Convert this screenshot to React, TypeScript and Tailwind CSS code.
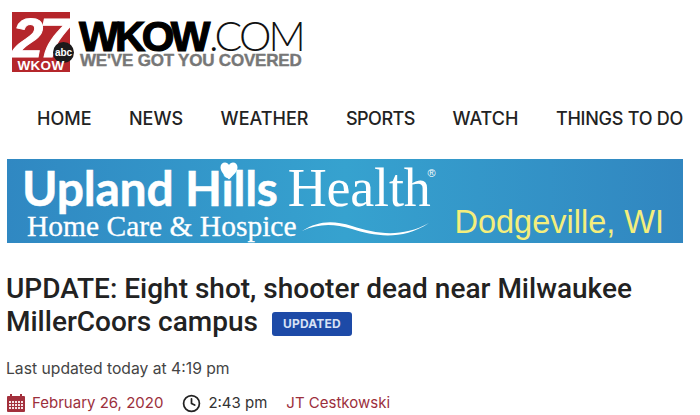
import { Clock } from 'lucide-react';

const navItems = [
  { label: 'HOME', className: '' },
  { label: 'NEWS', className: '' },
  { label: 'WEATHER', className: '' },
  { label: 'SPORTS', className: 'tracking-[-0.5px]' },
  { label: 'WATCH', className: '' },
  { label: 'THINGS TO DO', className: 'tracking-[-0.25px]' },
];

function StationBug() {
  return (
    <div className="relative w-[58px] h-[60px] mt-3 ml-3 shrink-0 bg-[#b5262b]">
      <span className="absolute left-[0px] top-[5px] h-[42px] text-white font-['Liberation_Sans',sans-serif] font-bold italic text-[56px] leading-[42px] tracking-[-4px] [-webkit-text-stroke:1px_white]">
        27
      </span>
      <div className="absolute right-[-4px] top-[30px] w-[21px] h-[21px] rounded-full bg-[#1c1a1b] flex items-center justify-center text-white font-['Liberation_Sans',sans-serif] text-[10px] font-bold leading-none">
        abc
      </div>
      <div className="absolute left-0 right-0 bottom-0 h-[12px] flex items-center justify-center text-white font-['Liberation_Sans',sans-serif] font-bold text-[13.5px] leading-none tracking-[0.3px]">
        WKOW
      </div>
    </div>
  );
}

function Wordmark() {
  return (
    <div className="ml-[9px] mt-[19px] flex flex-col">
      <div className="flex items-baseline h-[33px]">
        <span className="font-['Liberation_Sans',sans-serif] font-bold text-[42px] leading-[33px] text-black tracking-[-3.6px] [-webkit-text-stroke:1.2px_black]">
          WKOW
        </span>
        <span className="font-['Lato',sans-serif] font-light text-[41px] leading-[33px] text-[#111] tracking-[-2.8px] ml-[2px]">
          .COM
        </span>
      </div>
      <span className="ml-[1px] font-['Liberation_Sans',sans-serif] font-bold text-[17px] leading-[17px] text-[#777] tracking-[-0.2px] [-webkit-text-stroke:0.4px_#777]">
        WE&apos;VE GOT YOU COVERED
      </span>
    </div>
  );
}

function CalendarIcon() {
  return (
    <svg width="20" height="20" viewBox="0 0 20 20" className="shrink-0">
      <rect x="1" y="3" width="18" height="16" fill="#a3303c" rx="1" />
      <rect x="4" y="1" width="2" height="4" fill="#a3303c" />
      <rect x="14" y="1" width="2" height="4" fill="#a3303c" />
      <g fill="#f6e4e6">
        {[8, 11, 14].map((y) =>
          [3, 6, 9, 12, 15].map((x) => <rect key={`${x}-${y}`} x={x} y={y} width="2" height="2" />)
        )}
      </g>
    </svg>
  );
}

export default function App() {
  return (
    <div className="w-[700px] h-[415px] overflow-hidden bg-white font-['Inter',sans-serif]">
      <div className="flex h-[88px]">
        <StationBug />
        <Wordmark />
      </div>

      <nav className="flex gap-[37.5px] pl-[37px] h-[58px] items-center whitespace-nowrap text-[18px] font-medium text-[#222] pt-[2px]">
        {navItems.map((item) => (
          <a key={item.label} className={item.className}>{item.label}</a>
        ))}
      </nav>

      <div className="relative mx-[7px] mt-[13px] w-[676px] h-[84px] bg-gradient-to-r from-[#3088c2] via-[#36a2cf] to-[#3186c0] flex items-end justify-between pl-[15px] pr-[19px] pb-[3px] overflow-hidden">
        <div className="flex flex-col">
          <div className="flex items-baseline h-[50px] text-white">
            <span className="font-['Lato',sans-serif] font-bold text-[48px] leading-[50px] tracking-[-0.2px] [-webkit-text-stroke:0.5px_white]">Upland Hills</span>
            <span className="font-['Liberation_Serif',serif] text-[54px] leading-[50px] ml-[10px] tracking-[-0.2px]">Health</span>
            <span className="font-['Liberation_Sans',sans-serif] text-[11px] self-start mt-[2px] ml-[-3px]">®</span>
          </div>
          <div className="flex items-center h-[27px] text-white">
            <span className="font-['Liberation_Serif',serif] text-[29.5px] leading-[27px] ml-[5px] [-webkit-text-stroke:0.3px_white]">Home Care &amp; Hospice</span>
            <svg width="128" height="22" viewBox="0 0 128 22" className="ml-[5px] mt-[2px]">
              <path d="M0 14C16 4 30 3 50 9C74 17 100 21 127 6C100 24 72 19 50 12C30 6 16 7 0 14Z" fill="#fff" />
            </svg>
          </div>
        </div>
        <span className="font-['Liberation_Sans',sans-serif] text-[32.5px] leading-[36px] text-[#f4ee7c]">Dodgeville, WI</span>
        <svg width="18" height="18" viewBox="0 0 18 18" className="absolute left-[213px] top-[3px]">
          <path d="M9 17.5C4 12.5 0.5 9.5 0.5 5.2C0.5 2.4 2.6 0.5 5 0.5C6.8 0.5 8.2 1.5 9 3C9.8 1.5 11.2 0.5 13 0.5C15.4 0.5 17.5 2.4 17.5 5.2C17.5 9.5 14 12.5 9 17.5Z" fill="#fff" />
        </svg>
      </div>

      <h1 className="mt-[29px] ml-[6px] w-[670px] font-['Roboto',sans-serif] font-medium text-[28px] leading-[33px] text-[#222]">
        <span>UPDATE: Eight shot, shooter dead near Milwaukee MillerCoors campus</span>
        <span className="inline-flex align-[3px] items-center justify-center ml-[14px] w-[80px] h-[24px] rounded-[3px] bg-[#1d4aa7] text-[#d8e2f5] font-['Inter',sans-serif] text-[12px] leading-none font-bold tracking-[0.2px]">
          UPDATED
        </span>
      </h1>

      <p className="mt-[20px] ml-[6px] text-[15.7px] leading-[22px] text-[#444]">Last updated today at 4:19 pm</p>

      <div className="mt-[12px] ml-[6px] flex items-center text-[15px] leading-[22px] whitespace-nowrap">
        <CalendarIcon />
        <span className="ml-[6px] text-[#9c2f3c]">February 26, 2020</span>
        <Clock className="ml-[19px] w-[19px] h-[19px] text-[#222]" strokeWidth={2.2} />
        <span className="ml-[7px] text-[#333]">2:43 pm</span>
        <span className="ml-[19px] text-[#9c2f3c]">JT Cestkowski</span>
      </div>
    </div>
  );
}
